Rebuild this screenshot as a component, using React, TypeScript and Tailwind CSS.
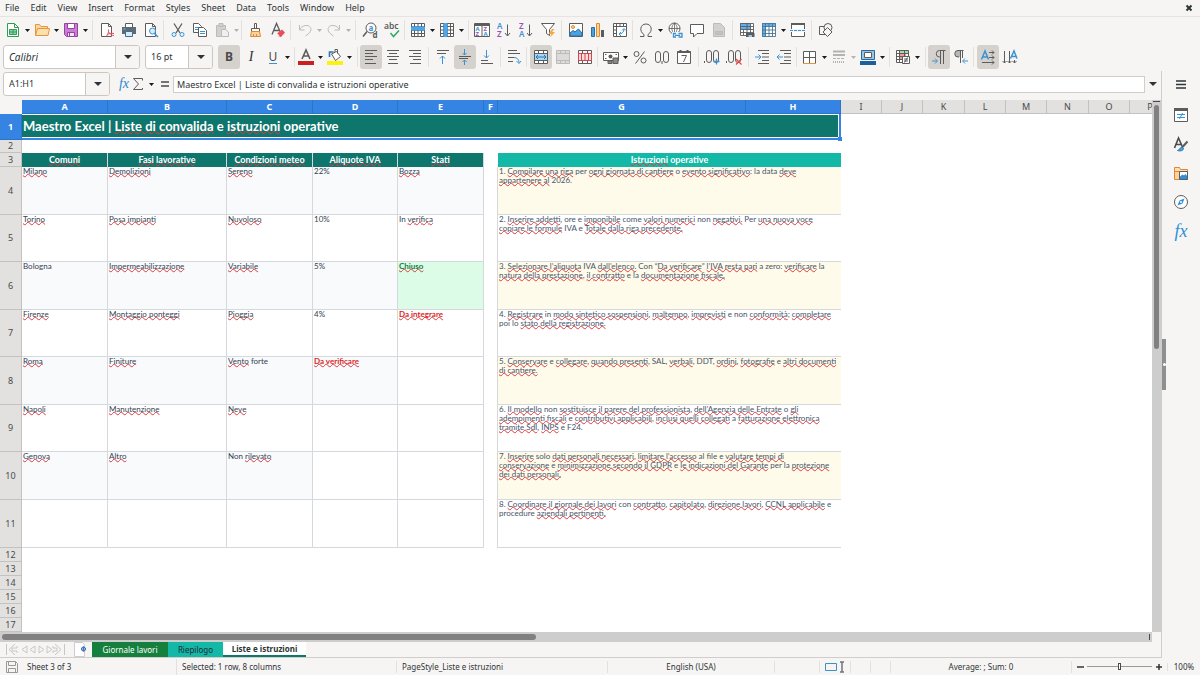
import { Fragment, useState } from 'react'
import type { ReactNode } from 'react'

const G = '#5c5c5c'
const B = '#3a93d4'
const L = '#bdbbb9'

const menus = ['File', 'Edit', 'View', 'Insert', 'Format', 'Styles', 'Sheet', 'Data', 'Tools', 'Window', 'Help']

// 16x16 drawings, stroked with a 1px pen on the half pixel grid
const icons: Record<string, ReactNode> = {
  new: (
    <>
      <path d="M2.5 1.5h7l4 4v9h-11z" fill="#fff" stroke="#2e9e55" />
      <path d="M9.5 1.5v4h4" stroke="#2e9e55" />
      <path d="M4.5 7.5h7v5h-7zM4.5 10h7M8 7.5v5" fill="#8fd6a6" stroke="#2e9e55" />
    </>
  ),
  open: (
    <>
      <path d="M1.5 13.5v-11h4l1.5 2h6.5v3" fill="#fbd9a5" stroke="#e8953a" />
      <path d="M1.5 13.5l2-7h12l-1.5 7z" fill="#fde0b0" stroke="#e8953a" />
    </>
  ),
  save: (
    <>
      <path d="M1.5 1.5h13v13h-11l-2-2z" fill="#c77fd0" stroke="#9a3fa8" />
      <path d="M4.5 1.5h7v5h-7z" fill="#fff" stroke="#9a3fa8" />
      <path d="M4.5 10.5h7v4h-7z" fill="#f3e3f5" stroke="#9a3fa8" />
      <path d="M6.5 11v3" stroke="#9a3fa8" />
    </>
  ),
  pdf: (
    <>
      <path d="M2.5 1.5h7l3 3v10h-10z" fill="#fff" stroke={G} />
      <path d="M9.5 1.5v3h3" stroke={G} />
      <path d="M7 14.500c2-2 3-5 2.500-7M9.500 9.500c1 2.500 3 4 5.500 4M8 13c2-1.500 4-2 7-1.500" stroke="#e8505a" />
    </>
  ),
  print: (
    <>
      <path d="M4.500 5v-3.500h7v3.500" fill="#fff" stroke={G} />
      <path d="M1 5h14v7H1z" fill="#5f6a72" />
      <path d="M2.500 7h2" stroke="#7cc0ee" />
      <path d="M4.500 9.500h7v5h-7z" fill="#d7ebf9" stroke="#39719a" />
    </>
  ),
  preview: (
    <>
      <path d="M2.500 1.500h7l3 3v10h-10z" fill="#fff" stroke={G} />
      <path d="M9.500 1.500v3h3" stroke={G} />
      <circle cx="9.500" cy="9" r="3" fill="#d8ecfa" stroke={B} />
      <path d="M11.500 11.500l3.500 3.500" stroke={B} strokeWidth="1.500" />
    </>
  ),
  cut: (
    <>
      <path d="M4 1.500l6 9.500M12 1.500l-6 9.500" stroke={G} strokeWidth="1.300" />
      <circle cx="4" cy="12.500" r="2" stroke={B} />
      <circle cx="12" cy="12.500" r="2" stroke={B} />
    </>
  ),
  copy: (
    <>
      <path d="M1.500 1.500h5l3 3v6h-8z" fill="#fff" stroke={G} />
      <path d="M3 5.500h4M3 7.500h3" stroke={B} />
      <path d="M6.500 5.500h5l3 3v6h-8z" fill="#fff" stroke={G} />
      <path d="M8 9.500h5M8 11.500h5" stroke={B} />
    </>
  ),
  paste: (
    <>
      <path d="M2.500 3.500h9v11h-9z" fill="#d3d1cf" stroke={L} />
      <path d="M5 1.500h4v3H5z" fill="#d3d1cf" stroke={L} />
      <path d="M7.500 7.500h4l3 2.500v4.500h-7z" fill="#f1f0ef" stroke={L} />
    </>
  ),
  brush: (
    <>
      <path d="M6.500 1.500h2v5h-2z" fill="#fff" stroke={G} />
      <path d="M3.500 6.500h8v3h-8z" fill="#fff" stroke={G} />
      <path d="M3.500 9.500h8l1 5h-10z" fill="#fbd39b" stroke="#e08b33" />
      <path d="M5.500 12v2.500M8.500 12v2.500" stroke="#e08b33" />
    </>
  ),
  clear: (
    <>
      <path d="M2 12.500l4.500-11 4 9M3.500 8.500h6" stroke={G} strokeWidth="1.300" />
      <path d="M7 11.500l5-4 3 3-4 4.500H9z" fill="#e8515b" />
      <path d="M7 11.500l2.500 3" stroke="#fff" />
    </>
  ),
  undo: (
    <>
      <path d="M2.500 3v5h5" stroke={L} />
      <path d="M2.500 8c2-5 9-6 11-2.500 1.500 3-1 6-5 8.500" stroke={L} />
    </>
  ),
  redo: (
    <>
      <path d="M13.500 3v5h-5" stroke={L} />
      <path d="M13.500 8c-2-5-9-6-11-2.500-1.500 3 1 6 5 8.500" stroke={L} />
    </>
  ),
  find: (
    <>
      <circle cx="9" cy="6" r="5" fill="#fff" stroke={G} />
      <path d="M5 9.500l-4 5" stroke={G} strokeWidth="1.500" />
      <text x="6.500" y="8.500" fontSize="8" fill={B} fontWeight="700">a</text>
      <text x="10.500" y="15.500" fontSize="8" fill={G} fontWeight="700">d</text>
    </>
  ),
  spell: (
    <>
      <text x="0" y="7" fontSize="8.500" fill={G} fontWeight="600">abc</text>
      <path d="M6.500 11l3 3.500 5.500-6" stroke="#2fa866" strokeWidth="1.500" />
    </>
  ),
  row: (
    <>
      <path d="M1.500 1.500h13v13h-13z" fill="#fff" />
      <path d="M1.500 1.500h13v13h-13zM1.500 11.500h13M4.500 1.500v13M8 1.500v13M11.500 1.500v13" stroke={G} />
      <path d="M1 4.500h14v4H1z" fill="#4fa6e6" />
      <path d="M1 4.500h14M1 8.500h14" stroke="#2776b3" strokeWidth=".6" />
    </>
  ),
  column: (
    <>
      <path d="M1.500 1.500h13v13h-13z" fill="#fff" />
      <path d="M1.500 1.500h13v13h-13zM11.500 1.500v13M1.500 4.500h13M1.500 8h13M1.500 11.500h13" stroke={G} />
      <path d="M4.500 1h4v14h-4z" fill="#4fa6e6" />
      <path d="M4.500 1v14M8.500 1v14" stroke="#2776b3" strokeWidth=".6" />
    </>
  ),
  sort: (
    <>
      <path d="M.5 1.500h15v13H.5zM.5 3.500h15M8 3.500v11" fill="#fff" stroke={G} />
      <path d="M1 2.500h14" stroke={G} />
      <text x="1.500" y="9" fontSize="6" fill={B} fontWeight="700">A</text>
      <text x="1.500" y="14" fontSize="6" fill="#9a4fb5" fontWeight="700">Z</text>
      <text x="9.500" y="9" fontSize="6" fill="#9a4fb5" fontWeight="700">Z</text>
      <text x="9.500" y="14" fontSize="6" fill={B} fontWeight="700">A</text>
    </>
  ),
  az: (
    <>
      <text x="1" y="7" fontSize="8" fill={B} fontWeight="600">A</text>
      <text x="1" y="15" fontSize="8" fill="#9a4fb5" fontWeight="600">Z</text>
      <path d="M11.500 2.500v11M9 11l2.500 3 2.500-3" stroke={G} />
    </>
  ),
  za: (
    <>
      <text x="1" y="7" fontSize="8" fill="#9a4fb5" fontWeight="600">Z</text>
      <text x="1" y="15" fontSize="8" fill={B} fontWeight="600">A</text>
      <path d="M11.500 2.500v11M9 11l2.500 3 2.500-3" stroke={G} />
    </>
  ),
  filter: (
    <>
      <path d="M1.500 1.500h13l-5 6v6l-3-2v-4z" fill="#fff" stroke={G} />
      <path d="M12 7l-3.500 5h3l-2 4 5.500-6h-3l2.500-3z" fill="#f2a54a" />
    </>
  ),
  image: (
    <>
      <path d="M1.500 1.500h13v13h-13z" fill="#fff" stroke={G} />
      <path d="M2 14v-3l3-2.500 2 1.500 3.500-3 3.500 4v3z" fill="#4aa3e0" stroke="#2d6fa5" />
      <circle cx="5" cy="5" r="1.500" fill="#fbd39b" stroke="#e08b33" />
    </>
  ),
  chart: (
    <>
      <path d="M1.500 5.500h3v9h-3z" fill="#4aa3e0" stroke="#2d6fa5" />
      <path d="M6.500 1.500h3v13h-3z" fill="#fbd39b" stroke="#e08b33" />
      <path d="M11 8h3v7h-3z" fill={G} />
    </>
  ),
  pivot: (
    <>
      <path d="M1.500 1.500h13v13h-13zM1.500 4.500h13M4.500 1.500v13M8 1.500v3M11.500 1.500v3M1.500 8h3M1.500 11.500h3" fill="#fff" stroke={G} />
      <path d="M7 12c3 0 5-2 5-5M10 8.500l2-2 2 2M9 10l-2 2 2 2" stroke={B} />
    </>
  ),
  omega: <path d="M2 14.500h4v-2c-5-3-4-10.500 2-10.500s7 7.500 2 10.500v2h4" stroke={G} />,
  link: (
    <>
      <circle cx="7.500" cy="6.500" r="5.500" fill="#fff" stroke={G} />
      <path d="M2 6.500h11M7.500 1v11M7.500 1c-3.500 3-3.500 8 0 11M7.500 1c3.500 3 3.500 8 0 11" stroke={G} strokeWidth=".8" />
      <path d="M5 10h11v6H5z" fill="#f6f5f4" />
      <path d="M9 11.500H6.500v3.500H9M11.500 11.500H15v3.500h-3.500M8 13.300h5" stroke={B} strokeWidth="1.300" />
    </>
  ),
  comment: <path d="M1.500 2.500h13v9H8l-3.500 3.500v-3.500h-3z" fill="#fff" stroke={G} />,
  header: (
    <>
      <path d="M2.500 1.500h7l4 4v9h-11z" fill="#d3d1cf" stroke={L} />
      <path d="M4.500 9.500h7v3h-7z" fill="#c3c1bf" stroke={L} />
    </>
  ),
  area: (
    <>
      <path d="M1.500 1.500h13v13h-13z" fill="#fff" />
      <path d="M1 1h10v7H1z" fill="#5fb0ec" />
      <path d="M1.500 1.500h13v12h-13zM1.500 4.500h13M1.500 7.500h13M1.500 10.500h13M4.500 7.500v6M8 1.500v12M11.500 1.500v12" stroke={G} strokeWidth=".9" />
      <path d="M7 11h8.500v4H7z" fill={G} />
      <path d="M9.500 13h3.500v2H9.500z" fill="#8fc9f1" />
    </>
  ),
  freeze: (
    <>
      <path d="M2.500 2.500h12v12h-12z" fill="#fff" />
      <path d="M1 1h14v3.500H5V15H1z" fill="#5fb0ec" />
      <path d="M1.500 1.500h13v13h-13zM1.500 4.500h13M1.500 8h13M1.500 11.500h13M4.500 1.500v13M8 1.500v13M11.500 1.500v13" stroke="#4a7591" strokeWidth=".9" />
    </>
  ),
  split: (
    <>
      <path d="M1.500 2.500h13v12h-13z" fill="#fff" stroke={G} />
      <path d="M1 2h14" stroke={G} strokeWidth="2" />
      <path d="M0 8.500h16" stroke="#f6f5f4" strokeWidth="3" />
      <path d="M0 8.500h16" stroke={B} strokeDasharray="3 1" />
    </>
  ),
  shapes: (
    <>
      <path d="M1.500 4.500h8v8h-8z" stroke={G} />
      <circle cx="10" cy="5.500" r="4" fill="#f6f5f4" stroke={G} />
      <path d="M9.500 5.500l4.500 4.500-4.500 4.500L5 10z" fill="#f6f5f4" stroke={G} />
    </>
  ),
  left: <path d="M2 1.500h12M2 4.500h8M2 7.500h12M2 10.500h8M2 14.500h11" stroke={G} />,
  center: <path d="M2 1.500h12M4 4.500h8M2 7.500h12M4 10.500h8M3 14.500h10" stroke={G} />,
  right: <path d="M2 1.500h12M6 4.500h8M2 7.500h12M6 10.500h8M3 14.500h11" stroke={G} />,
  top: (
    <>
      <path d="M2 1.500h12M2 4.500h9" stroke={G} />
      <path d="M7.500 15V7M5 9.500L7.500 7l2.500 2.500" stroke={B} />
    </>
  ),
  middle: (
    <>
      <path d="M2 7.500h12M2 9.500h9" stroke={G} />
      <path d="M7.500 0v6M5.500 4l2 2 2-2M7.500 16v-5M5.500 13l2-2 2 2" stroke={B} />
    </>
  ),
  bottom: (
    <>
      <path d="M2 11.500h7M2 14.500h12" stroke={G} />
      <path d="M7.500 1v8M5 6.500L7.500 9 10 6.500" stroke={B} />
    </>
  ),
  wrap: (
    <>
      <path d="M2 1.500h9M2 4.500h12M2 8.500h6M2 12.500h5" stroke={G} />
      <path d="M8 8.500c3 0 5 2 5 5M10.500 12l2.500 2.500 2-2.500" stroke={B} />
    </>
  ),
  merge: (
    <>
      <path d="M1.500 1.500h13v13h-13zM1.500 4.500h13M1.500 11.500h13M5.500 1.500v3M10.500 1.500v3M5.500 11.500v3M10.500 11.500v3" fill="#fff" stroke={G} />
      <path d="M2 5h12v6H2z" fill="#a9d6f5" />
      <path d="M3 8h10M5 6L3 8l2 2M11 6l2 2-2 2" stroke="#2776b3" />
    </>
  ),
  mergeOff: <path d="M1.500 1.500h13v13h-13zM1.500 4.500h13M1.500 11.500h13M5.500 1.500v3M10.500 1.500v3M5.500 11.500v3M10.500 11.500v3" fill="#dddbd9" stroke={L} />,
  unmerge: (
    <>
      <path d="M1.500 1.500h13v13h-13zM5.500 1.500v3M10.500 1.500v3M5.500 11.500v3M10.500 11.500v3" fill="#fff" stroke={G} />
      <path d="M1.500 4.500h13v7h-13zM4.500 4.500v7M8 4.500v7M11.500 4.500v7" fill="#fbdcdc" stroke="#d8454a" />
    </>
  ),
  currency: (
    <>
      <path d="M.5 3.500h15v8H.5z" fill="#fff" stroke={G} />
      <circle cx="7.500" cy="7.500" r="2" fill={G} />
      <path d="M2 5.500h1.500M12.500 5.500H14M2 9.500h1.500" stroke={G} />
      <path d="M10 9h5v5.500h-5zM5 12h4v2.500H5z" fill="#8b8a88" stroke={G} />
    </>
  ),
  percent: (
    <>
      <circle cx="4.500" cy="5" r="2.500" stroke={G} />
      <circle cx="11.500" cy="11.500" r="2.500" stroke={G} />
      <path d="M12.500 2.500l-9 12" stroke={G} />
    </>
  ),
  number: (
    <>
      <rect x="1.500" y="2.500" width="5" height="11" rx="2.500" stroke={G} />
      <rect x="9.500" y="2.500" width="5" height="11" rx="2.500" stroke={G} />
      <path d="M8 12v3" stroke={G} />
    </>
  ),
  date: (
    <>
      <path d="M1.500 2.500h13v12h-13z" fill="#fff" stroke={G} />
      <path d="M1.500 3h13M4.500 1v3M11.500 1v3" stroke={G} strokeWidth="2" />
      <path d="M5.500 6.500h5l-3 6.500" stroke={G} />
    </>
  ),
  decAdd: (
    <>
      <path d="M.5 12v2" stroke={G} />
      <rect x="2.500" y="1.500" width="5" height="12" rx="2.500" stroke={G} />
      <rect x="9.500" y="1.500" width="5" height="12" rx="2.500" stroke={G} />
      <path d="M12.500 9.500v6M9.500 12.500h6" stroke={B} strokeWidth="1.300" />
    </>
  ),
  decDel: (
    <>
      <path d="M.5 12v2" stroke={G} />
      <rect x="2.500" y="1.500" width="5" height="12" rx="2.500" stroke={G} />
      <rect x="9.500" y="1.500" width="5" height="12" rx="2.500" stroke={G} />
      <path d="M10 10l5.500 5.500M15.500 10L10 15.500" stroke="#e0484e" strokeWidth="1.300" />
    </>
  ),
  indent: (
    <>
      <path d="M4 1.500h11M8 4.500h7M8 8h7M8 11.500h7M4 14.500h11" stroke={G} />
      <path d="M1 8h6M4.500 5.500L7 8l-2.500 2.500" stroke={B} />
    </>
  ),
  outdent: (
    <>
      <path d="M4 1.500h11M8 4.500h7M8 8h7M8 11.500h7M4 14.500h11" stroke={G} />
      <path d="M7 8H1M3.500 5.500L1 8l2.500 2.500" stroke={B} />
    </>
  ),
  borders: (
    <>
      <path d="M1.500 14.500v-12h12v12M7.500 2.500v12M1.500 8.500h12" fill="#fff" stroke={G} />
      <path d="M1 14.500h13" stroke="#e0963f" />
    </>
  ),
  lineStyle: (
    <>
      <path d="M2 2.500h12M2 6h12" stroke="#b5b3b1" strokeWidth="2" />
      <path d="M2 9.500h12" stroke="#b5b3b1" strokeDasharray="3 1" />
      <path d="M2 13h12" stroke="#b5b3b1" strokeDasharray="1 1" strokeWidth="2" />
    </>
  ),
  lineColor: (
    <>
      <path d="M1.500 1.500h13v9h-13z" fill="#8fc9f1" stroke="#35668c" />
      <path d="M4.500 3.500h7v5h-7z" fill="#fff" stroke={G} />
      <path d="M0 12h16v4H0z" fill="#1c5f9e" />
    </>
  ),
  conditional: (
    <>
      <path d="M1.500 1.500h12v12h-12z" fill="#fff" />
      <path d="M5 1h9v4H5z" fill="#9fdfae" />
      <path d="M5 5h6v6H5z" fill="#f29b9b" />
      <path d="M1.500 1.500h12v12h-12zM1.500 4.500h12M1.500 7.500h12M1.500 10.500h12M4.500 1.500v12M9.500 1.500v6" stroke={G} />
      <path d="M7.500 7.500h7v7h-7z" fill="#fff" stroke={G} />
      <path d="M9 10h4M9 12h4M12.500 8.500l-3 5" stroke={G} />
    </>
  ),
  ltr: (
    <>
      <path d="M14.500 1.500H8.500a3 3 0 000 6.500h1M9.500 1.500V15M12.500 1.500V15" stroke={G} />
      <path d="M1 12h5M4 9.500L6.500 12 4 14.500" stroke={B} />
    </>
  ),
  rtl: (
    <>
      <path d="M7.500 1.500H5a3 3 0 000 6.500h2.500z" fill="#b9b7b5" />
      <path d="M10.500 1.500H5a3 3 0 000 6.500h1M7.500 1.500V14M9.500 1.500V9" stroke={G} />
      <path d="M15 12h-5M12 9.500L9.500 12l2.500 2.500" stroke={B} />
    </>
  ),
  textLtr: (
    <>
      <path d="M1.500 10.500L5 2l3.500 8.500M2.500 8h5" stroke={B} strokeWidth="1.500" />
      <path d="M9 3.500h5M9 8.500h5M2 13.500h12M12 1.500l2 2-2 2M12 6.500l2 2-2 2M12 11.500l2 2-2 2" stroke={G} />
    </>
  ),
  textTtb: (
    <>
      <path d="M8.500 9.500L12 2l3 7.500M9.500 7.500h5" stroke={B} strokeWidth="1.500" />
      <path d="M2.500 2v12M7.500 2v12M12.500 11v3M.5 12l2 2 2-2M5.500 12l2 2 2-2M10.500 12l2 2 2-2" stroke={G} />
    </>
  ),
  fill: (
    <>
      <path d="M4.500 5l5-2.500 4 5-5 4zM8 3V.500h2.500v4" fill="#fff" stroke={G} />
      <path d="M2.500 8V3h4" stroke="#2776b3" strokeWidth="1.600" />
      <path d="M0 12h16v4H0z" fill="#fbf30c" />
    </>
  ),
  fontColor: (
    <>
      <path d="M4 10l4-9 4 9M5 7h6" stroke={G} strokeWidth="1.600" />
      <path d="M0 12h16v4H0z" fill="#c9211e" />
    </>
  ),
  properties: (
    <>
      <path d="M1.500 2.500h13v12h-13z" fill="#fff" stroke={G} />
      <path d="M1 2.500h14" stroke={G} strokeWidth="3" />
      <path d="M4 7.500h8M4 10.500h8M9.500 6l-3 6" stroke={B} />
    </>
  ),
  styles: (
    <>
      <path d="M1.500 12L5.500 2l4 9M3 8.500h5.500" stroke="#4a4a4a" strokeWidth="1.600" />
      <path d="M14.500 5.500L9.500 11" stroke={G} strokeWidth="2" />
      <path d="M4.500 14.500c2 0 2-3 4.500-3.500l1.500 1.500c0 2-3 3-6 2z" fill="#4aa3e0" stroke="#2776b3" />
    </>
  ),
  gallery: (
    <>
      <path d="M1.500 14.500v-12h5l1 2h7v2" fill="#fde0b0" stroke="#e0853a" />
      <path d="M1.500 14.500v-8h13v8z" fill="#fbd39b" stroke="#e0853a" />
      <path d="M6.500 6.500h8v8h-8z" fill="#fff" stroke={G} />
      <path d="M7 14v-2.500l2.500-2 1.500 1 1.500-1.500 1.500 2V14z" fill="#2f8fd6" />
    </>
  ),
  navigator: (
    <>
      <circle cx="8" cy="8" r="6.500" fill="#fff" stroke={G} />
      <path d="M11.500 4.500L9.500 9.500l-5 2 2-5z" fill="#2f8fd6" />
      <circle cx="8" cy="8" r="1" fill="#fff" />
    </>
  ),
  sum: <path d="M12.500 4.500V2.500h-9l5 5.500-5 5.500h9V12" stroke={G} />,
  disk: <path d="M2.500 2.500h9l2 2v9h-11zM4.500 2.500v4h7v-4M4.500 13.500v-4h7v4" stroke="#9a9996" />,
}

function Icon({ name }: { name: string }) {
  return (
    <svg viewBox="0 0 16 16" fill="none" className="size-4 shrink-0 overflow-visible font-['Noto_Sans']" aria-hidden="true">
      {icons[name]}
    </svg>
  )
}

function Caret({ dim }: { dim?: boolean }) {
  return (
    <svg viewBox="0 0 5 3" className="h-[3px] w-[5px] shrink-0" aria-hidden="true">
      <path d="M0 0h5L2.500 3z" fill={dim ? '#b5b3b1' : '#1a1a1a'} />
    </svg>
  )
}

type Tool = { id: string; label: string; drop?: boolean; on?: boolean; dim?: boolean; glyph?: ReactNode }
type Group = { width: string; tools: Tool[] }

const standardBar: Group[] = [
  { width: 'w-[93px] pl-[2px]', tools: [{ id: 'new', label: 'New', drop: true }, { id: 'open', label: 'Open', drop: true }, { id: 'save', label: 'Save', drop: true }] },
  { width: 'w-[71px] pl-[3px]', tools: [{ id: 'pdf', label: 'Export as PDF' }, { id: 'print', label: 'Print' }, { id: 'preview', label: 'Print preview' }] },
  { width: 'w-[78px] pl-[3px]', tools: [{ id: 'cut', label: 'Cut' }, { id: 'copy', label: 'Copy' }, { id: 'paste', label: 'Paste', drop: true, dim: true }] },
  { width: 'w-[49px] pl-[3px]', tools: [{ id: 'brush', label: 'Clone formatting' }, { id: 'clear', label: 'Clear formatting' }] },
  { width: 'w-[65px] pl-[3px]', tools: [{ id: 'undo', label: 'Undo', drop: true, dim: true }, { id: 'redo', label: 'Redo', drop: true, dim: true }] },
  { width: 'w-[49px] pl-[3px]', tools: [{ id: 'find', label: 'Find and replace' }, { id: 'spell', label: 'Spelling' }] },
  { width: 'w-[64px] pl-[2px]', tools: [{ id: 'row', label: 'Row', drop: true }, { id: 'column', label: 'Column', drop: true }] },
  { width: 'w-[93px] pl-[2px]', tools: [{ id: 'sort', label: 'Sort' }, { id: 'az', label: 'Sort ascending' }, { id: 'za', label: 'Sort descending' }, { id: 'filter', label: 'AutoFilter' }] },
  { width: 'w-[71px] pl-[3px]', tools: [{ id: 'image', label: 'Insert image' }, { id: 'chart', label: 'Insert chart' }, { id: 'pivot', label: 'Pivot table' }] },
  { width: 'w-[100px] pl-[2px]', tools: [{ id: 'omega', label: 'Special character', drop: true }, { id: 'link', label: 'Hyperlink' }, { id: 'comment', label: 'Comment' }, { id: 'header', label: 'Headers and footers', dim: true }] },
  { width: 'w-[79px] pl-[3px]', tools: [{ id: 'area', label: 'Print area' }, { id: 'freeze', label: 'Freeze panes', drop: true }, { id: 'split', label: 'Split window' }] },
  { width: 'pl-[3px] border-r-0', tools: [{ id: 'shapes', label: 'Draw functions' }] },
]

const formatBar: Group[] = [
  {
    width: 'w-[82px] pl-[5px]',
    tools: [
      { id: 'bold', label: 'Bold', on: true, glyph: <span className="text-xs font-bold text-[#4a4a4a]">B</span> },
      { id: 'italic', label: 'Italic', glyph: <span className="font-['Liberation_Serif'] text-sm italic">I</span> },
      { id: 'underline', label: 'Underline', drop: true, glyph: <span className="border-b border-[#3a93d4] text-xs leading-3 text-[#4a4a4a]">U</span> },
    ],
  },
  { width: 'w-[63px]', tools: [{ id: 'fontColor', label: 'Font colour', drop: true }, { id: 'fill', label: 'Background colour', drop: true }] },
  { width: 'w-[71px] pl-[2px]', tools: [{ id: 'left', label: 'Align left', on: true }, { id: 'center', label: 'Align centre' }, { id: 'right', label: 'Align right' }] },
  { width: 'w-[72px] pl-[3px]', tools: [{ id: 'top', label: 'Align top' }, { id: 'middle', label: 'Centre vertically', on: true }, { id: 'bottom', label: 'Align bottom' }] },
  { width: 'w-[26px] pl-[2px]', tools: [{ id: 'wrap', label: 'Wrap text' }] },
  { width: 'w-[71px] pl-[3px]', tools: [{ id: 'merge', label: 'Merge and centre', on: true }, { id: 'mergeOff', label: 'Merge cells', dim: true }, { id: 'unmerge', label: 'Unmerge cells' }] },
  { width: 'w-[101px] pl-[2px]', tools: [{ id: 'currency', label: 'Currency', drop: true }, { id: 'percent', label: 'Percent' }, { id: 'number', label: 'Number' }, { id: 'date', label: 'Date' }] },
  { width: 'w-[50px] pl-[2px]', tools: [{ id: 'decAdd', label: 'Add decimal place' }, { id: 'decDel', label: 'Delete decimal place' }] },
  { width: 'w-[48px] pl-[2px]', tools: [{ id: 'indent', label: 'Increase indent' }, { id: 'outdent', label: 'Decrease indent' }] },
  { width: 'w-[93px] pl-[2px]', tools: [{ id: 'borders', label: 'Borders', drop: true }, { id: 'lineStyle', label: 'Border style', drop: true, dim: true }, { id: 'lineColor', label: 'Border colour', drop: true }] },
  { width: 'w-[36px] pl-[2px]', tools: [{ id: 'conditional', label: 'Conditional formatting', drop: true }] },
  { width: 'w-[48px] pl-[2px]', tools: [{ id: 'ltr', label: 'Left to right', on: true }, { id: 'rtl', label: 'Right to left' }] },
  { width: 'pl-[3px] border-r-0', tools: [{ id: 'textLtr', label: 'Horizontal text', on: true }, { id: 'textTtb', label: 'Vertical text' }] },
]

function ToolGroups({ groups }: { groups: Group[] }) {
  return (
    <>
      {groups.map((group, i) => (
        <div key={i} className={`flex h-5 shrink-0 items-center border-r border-[#e3e1df] ${group.width}`}>
          {group.tools.map((tool) => (
            <Fragment key={tool.id}>
              <button
                type="button"
                aria-label={tool.label}
                className={`flex h-6 w-[22px] shrink-0 items-center justify-center rounded-[3px] ${tool.on ? 'bg-[#d5d1cd]' : ''}`}
              >
                {tool.glyph ?? <Icon name={tool.id} />}
              </button>
              {tool.drop && (
                <button type="button" aria-label={`${tool.label} options`} className="flex h-6 w-[7px] shrink-0 items-center justify-center">
                  <Caret dim={tool.dim} />
                </button>
              )}
            </Fragment>
          ))}
        </div>
      ))}
    </>
  )
}

function Combo({ label, value, width, italic }: { label: string; value: string; width: string; italic?: boolean }) {
  return (
    <div className={`flex h-6 shrink-0 overflow-hidden rounded-[3px] border border-[#cdc7c2] bg-white ${width}`}>
      <input
        aria-label={label}
        defaultValue={value}
        className={`min-w-0 flex-1 bg-transparent px-[5px] outline-none ${italic ? 'text-[10px] italic' : ''}`}
      />
      <button type="button" aria-label={`${label} list`} className="flex w-6 items-center justify-center border-l border-[#cdc7c2] bg-[#f6f5f4]">
        <svg viewBox="0 0 8 4" className="h-1 w-2" aria-hidden="true">
          <path d="M0 0h8L4 4z" fill="#2e3436" />
        </svg>
      </button>
    </div>
  )
}

const columns = [
  { name: 'A', width: 'w-[86px]' },
  { name: 'B', width: 'w-[119px]' },
  { name: 'C', width: 'w-[86px]' },
  { name: 'D', width: 'w-[85px]' },
  { name: 'E', width: 'w-[86px]' },
  { name: 'F', width: 'w-[14px]' },
  { name: 'G', width: 'w-[248px]' },
  { name: 'H', width: 'w-[95px]' },
  { name: 'I', width: 'w-[41px]' },
  { name: 'J', width: 'w-[41px]' },
  { name: 'K', width: 'w-[42px]' },
  { name: 'L', width: 'w-[41px]' },
  { name: 'M', width: 'w-[41px]' },
  { name: 'N', width: 'w-[42px]' },
  { name: 'O', width: 'w-[41px]' },
  { name: 'P', width: 'w-[41px]' },
]

// [..] marks the words the spell checker flags
const headings = ['[Comuni]', '[Fasi] [lavorative]', '[Condizioni meteo]', '[Aliquote IVA]', '[Stati]']

const rows: { height: string; cells: string[]; note: string }[] = [
  { height: 'h-[48px]', cells: ['[Milano]', '[Demolizioni]', '[Sereno]', '22%', '[Bozza]'], note: '1. [Compilare una riga] per [ogni giornata di cantiere] o [evento significativo]: la data [deve]\n[appartenere al] 2026.' },
  { height: 'h-[47px]', cells: ['[Torino]', '[Posa impianti]', '[Nuvoloso]', '10%', 'In [verifica]'], note: '2. [Inserire addetti], ore e [imponibile] come [valori numerici] non [negativi.] Per [una nuova voce]\n[copiare le formule] IVA e [Totale dalla riga precedente.]' },
  { height: 'h-[48px]', cells: ['Bologna', '[Impermeabilizzazione]', '[Variabile]', '5%', '[Chiuso]'], note: '3. [Selezionare l’aliquota] IVA [dall’elenco.] Con “[Da verificare]” [l’IVA resta pari] a zero: [verificare] la\n[natura della prestazione], [il contratto] e la [documentazione fiscale.]' },
  { height: 'h-[47px]', cells: ['[Firenze]', '[Montaggio ponteggi]', '[Pioggia]', '4%', '[Da integrare]'], note: '4. [Registrare] in [modo sintetico sospensioni], [maltempo], [imprevisti] e non [conformità]; [completare]\npoi lo [stato della registrazione.]' },
  { height: 'h-[48px]', cells: ['[Roma]', '[Finiture]', '[Vento] forte', '[Da verificare]', ''], note: '5. [Conservare] e [collegare], [quando presenti], SAL, [verbali], DDT, [ordini], [fotografie] e [altri documenti]\n[di cantiere.]' },
  { height: 'h-[47px]', cells: ['[Napoli]', '[Manutenzione]', '[Neve]', '', ''], note: '6. [Il modello] non [sostituisce il parere del professionista], [dell’Agenzia delle Entrate] o [gli]\n[adempimenti fiscali] e [contributivi applicabili], [inclusi quelli collegati] a [fatturazione elettronica]\n[tramite SdI], [INPS] e F24.' },
  { height: 'h-[48px]', cells: ['[Genova]', '[Altro]', 'Non [rilevato]', '', ''], note: '7. [Inserire] solo [dati personali necessari], [limitare l’accesso] al file e [valutare tempi di]\n[conservazione] e [minimizzazione secondo il GDPR] e [le indicazioni del Garante] per la [protezione]\n[dei dati personali.]' },
  { height: 'h-[48px]', cells: ['', '', '', '', ''], note: '8. [Coordinare il giornale dei lavori] con [contratto], [capitolato], [direzione lavori], [CCNL applicabile] e\nprocedure [aziendali pertinenti.]' },
]

function Spell({ text }: { text: string }) {
  return (
    <>
      {text.split(/[[\]]/).map((part, i) =>
        i % 2 === 1 ? (
          <span key={i} className="underline decoration-[#e0393e] decoration-wavy decoration-1 underline-offset-[-1px] [text-decoration-skip-ink:none]">
            {part}
          </span>
        ) : (
          part
        ),
      )}
    </>
  )
}

function RowHead({ n, active }: { n: number; active?: boolean }) {
  return (
    <th
      scope="row"
      className={`border-r border-b p-0 text-center ${
        active ? 'border-[#2a76c6] bg-[#3584e4] font-bold text-white' : 'border-[#c4c2c0] bg-[#e2e1df] font-normal text-[#4a4a4a]'
      }`}
    >
      {n}
    </th>
  )
}

const emptyRows = [12, 13, 14, 15, 16, 17, 18]

function Sheet() {
  return (
    <table className="w-0 table-fixed border-separate border-spacing-0 text-[9px] leading-3">
      <colgroup>
        <col className="w-[22px]" />
        {columns.map((c) => (
          <col key={c.name} className={c.width} />
        ))}
      </colgroup>
      <thead>
        <tr className="h-[14px]">
          <td className="border-b border-[#f6f5f4] bg-[#f6f5f4] p-0" />
          {columns.map((c, i) => (
            <th
              key={c.name}
              scope="col"
              className={`border-r border-b p-0 text-center ${
                i < 8 ? 'border-[#2a76c6] bg-[#3584e4] font-bold text-white' : 'border-[#c4c2c0] bg-[#e2e1df] font-normal text-[#4a4a4a]'
              }`}
            >
              {c.name}
            </th>
          ))}
        </tr>
      </thead>
      <tbody>
        <tr className="h-[26px]">
          <RowHead n={1} active />
          <td colSpan={8} className="relative border-r-2 border-b-2 border-[#3584e4] bg-[#0f766e] p-0 align-top">
            <div className="flex h-6 items-center border border-l-0 border-white pl-px font-['Lato'] text-[13px] font-bold whitespace-nowrap text-white">
              <span>
                <Spell text="Maestro Excel | [Liste di convalida] e [istruzioni] operative" />
              </span>
            </div>
            <div className="absolute -right-[3px] -bottom-[3px] size-1 bg-[#3584e4]" />
          </td>
        </tr>
        <tr className="h-[13px]">
          <RowHead n={2} />
        </tr>
        <tr className="h-[14px]">
          <RowHead n={3} />
          {headings.map((h) => (
            <td key={h} className="border-r border-[#d5d9dd] bg-[#0f766e] p-0 text-center font-['Lato'] text-[9px] leading-3 font-bold text-white">
              <Spell text={h} />
            </td>
          ))}
          <td />
          <td colSpan={2} className="bg-[#14b8a6] p-0 text-center font-['Lato'] text-[9px] leading-3 font-bold text-white">
            <Spell text="[Istruzioni] operative" />
          </td>
        </tr>
        {rows.map((row, r) => (
          <tr key={r} className={row.height}>
            <RowHead n={r + 4} />
            {row.cells.map((cell, c) => {
              const shaded = r % 2 === 0 && (c < 4 ? r < 7 && !(c === 3 && r > 4) : r === 0)
              const done = cell === '[Chiuso]'
              const todo = cell.startsWith('[Da ')
              return (
                <td
                  key={c}
                  className={`border-r border-b border-[#d5d9dd] p-0 pl-px align-top font-['Lato'] text-[8px] leading-[9px] ${
                    done ? 'bg-[#dcfce7] font-bold text-[#15803d]' : shaded ? 'bg-[#f8fafc]' : 'bg-white'
                  } ${todo ? 'font-bold text-[#dc2626]' : done ? '' : 'text-[#374151]'}`}
                >
                  <Spell text={cell} />
                </td>
              )
            })}
            <td className="border-r border-[#d5d9dd]" />
            <td
              colSpan={2}
              className={`border-b border-[#d5d9dd] p-0 pl-px align-top font-['Lato'] text-[8px] leading-[9px] whitespace-pre text-[#475569] ${
                r % 2 === 0 && r < 7 ? 'bg-[#fffbeb]' : 'bg-white'
              }`}
            >
              <Spell text={row.note} />
            </td>
          </tr>
        ))}
        {emptyRows.map((n) => (
          <tr key={n} className="h-[14px]">
            <RowHead n={n} />
          </tr>
        ))}
      </tbody>
    </table>
  )
}

const tabs = [
  { name: 'Giornale lavori', width: 'w-[76px]', tone: 'bg-[#15803d] text-white' },
  { name: 'Riepilogo', width: 'w-[55px]', tone: 'bg-[#14b8a6] text-[#1f2937]' },
  { name: 'Liste e istruzioni', width: 'w-[83px]', tone: 'bg-white text-[#2e3436]' },
]

const sidebar = [
  { id: 'properties', label: 'Properties' },
  { id: 'styles', label: 'Styles' },
  { id: 'gallery', label: 'Gallery' },
  { id: 'navigator', label: 'Navigator' },
]

export default function App() {
  const [active, setActive] = useState('Liste e istruzioni')
  const [zoom, setZoom] = useState(50)

  return (
    <div className="flex h-screen flex-col overflow-hidden bg-[#f6f5f4] font-['Noto_Sans',sans-serif] text-[9px] leading-3 text-[#2e3436]">
      <nav className="flex h-[17px] shrink-0 items-center gap-[11px] border-b border-[#e6e4e2] pr-[7px] pl-[5px]">
        {menus.map((m) => (
          <button key={m} type="button">{m}</button>
        ))}
        <button type="button" aria-label="Close document" className="ml-auto">
          <svg viewBox="0 0 8 8" className="size-2" aria-hidden="true">
            <path d="M1.500 1.500l5 5M6.500 1.500l-5 5" stroke="#2e3436" strokeWidth="2" />
          </svg>
        </button>
      </nav>

      <div className="flex h-[27px] shrink-0 items-center pb-px">
        <ToolGroups groups={standardBar} />
      </div>

      <div className="flex h-[27px] shrink-0 items-center pb-px pl-[3px]">
        <Combo label="Font name" value="Calibri" width="w-[137px]" italic />
        <div className="w-[5px] shrink-0" />
        <Combo label="Font size" value="16 pt" width="w-[68px]" />
        <ToolGroups groups={formatBar} />
      </div>

      <div className="flex min-h-0 flex-1">
        <main className="flex min-w-0 flex-1 flex-col border-r border-[#d0cecc]">
          {/* Formula bar */}
          <div className="flex h-[29px] shrink-0 items-center pb-[3px] pl-[3px]">
            <Combo label="Name box" value="A1:H1" width="w-[107px]" />
            <button type="button" aria-label="Function wizard" className="ml-2 w-3 font-['Liberation_Serif'] text-sm text-[#2f86cc] italic">fx</button>
            <button type="button" aria-label="Select function" className="flex items-center gap-[3px]">
              <Icon name="sum" />
              <Caret />
            </button>
            <button type="button" aria-label="Formula" className="ml-[3px] flex w-4 justify-center">
              <svg viewBox="0 0 8 6" className="h-[6px] w-2" aria-hidden="true">
                <path d="M0 1h8M0 5h8" stroke="#4a4a4a" strokeWidth="1.500" />
              </svg>
            </button>
            <input
              aria-label="Formula input"
              defaultValue="Maestro Excel | Liste di convalida e istruzioni operative"
              className="h-[17px] min-w-0 flex-1 border border-[#d0cecc] bg-white px-[3px] outline-none"
            />
            <button type="button" aria-label="Expand formula bar" className="flex w-4 justify-center">
              <svg viewBox="0 0 8 4" className="h-1 w-2" aria-hidden="true">
                <path d="M0 0h8L4 4z" fill="#2e3436" />
              </svg>
            </button>
          </div>

          <div className="flex min-h-0 flex-1">
            <div className="min-w-0 flex-1 overflow-hidden bg-white">
              <Sheet />
            </div>
            <div className="flex w-[9px] shrink-0 flex-col items-center gap-[3px] bg-[#cdcdcd] pt-px">
              <div className="h-px w-[7px] bg-[#4a4a4a]" />
              <div className="h-[46%] w-[5px] rounded-full bg-[#808080]" />
            </div>
          </div>

          <div className="mr-[9px] flex h-[10px] shrink-0 items-center justify-between bg-[#cdcdcd] px-[2px]">
            <div className="h-[6px] w-[46.5%] rounded-full bg-[#808080]" />
            <div className="h-[6px] w-px bg-[#4a4a4a]" />
          </div>

          <div className="flex h-4 shrink-0 border-b border-[#d0cecc] text-[8px]">
            <svg viewBox="0 0 64 14" className="ml-[3px] h-[14px] w-16" fill="none" stroke="#c9c7c5" aria-hidden="true">
              <path d="M3.500 2v11M12 2L6 7.500l6 5.500M14 4v2H9v3h5v2M24 4l-5 3.500 5 3.500zM32 4l-5 3.500 5 3.500zM36 4l5 3.500-5 3.500zM44 4l5 3.500-5 3.500zM52 2l6 5.500-6 5.500M50 4v2h4v3h-4v2M61.500 2v11" />
            </svg>
            <button type="button" aria-label="Add sheet" className="mr-[6px] ml-[7px] flex w-3">
              <svg viewBox="0 0 12 15" className="h-[15px] w-3" aria-hidden="true">
                <path d="M.5.5h8l2 2v12H.5z" fill="#fff" stroke="#d0cecc" />
                <circle cx="9.500" cy="7" r="2" fill="#fff" stroke="#2a62b8" />
                <path d="M9.500 4.500v5M7 7h5" stroke="#2a62b8" strokeWidth=".8" />
              </svg>
            </button>
            {tabs.map((t) => (
              <button
                key={t.name}
                type="button"
                onClick={() => setActive(t.name)}
                className={`${t.width} ${t.tone} whitespace-nowrap ${active === t.name ? 'border-b-2 border-[#0f766e] font-bold' : ''}`}
              >
                {t.name}
              </button>
            ))}
          </div>
        </main>

        <aside className="relative flex w-[38px] shrink-0 flex-col items-center gap-[13px] pt-[5px]">
          <button type="button" aria-label="Sidebar settings" className="mb-[2px] flex size-4 items-center justify-center">
            <svg viewBox="0 0 10 9" className="h-[9px] w-[10px]" aria-hidden="true">
              <path d="M0 1h10M0 4.500h10M0 8h10" stroke="#2e3436" strokeWidth="1.500" />
            </svg>
          </button>
          {sidebar.map((s) => (
            <button key={s.id} type="button" aria-label={s.label}>
              <Icon name={s.id} />
            </button>
          ))}
          <button type="button" aria-label="Functions" className="h-4 font-['Liberation_Serif'] text-lg leading-4 text-[#2f8fd6] italic">fx</button>
          <div className="absolute top-[268px] left-0 flex h-[51px] w-1 items-center justify-center bg-[#8f8f8f]">
            <div className="size-[3px] rounded-full bg-white" />
          </div>
        </aside>
      </div>

      <footer className="flex h-[17px] shrink-0 items-center text-[8px]">
        <div className="flex w-[177px] items-center gap-[7px] border-r border-[#e3e1df] pl-1">
          <Icon name="disk" />
          Sheet 3 of 3
        </div>
        <div className="w-[220px] border-r border-[#e3e1df] pl-[5px]">Selected: 1 row, 8 columns</div>
        <div className="w-[211px] border-r border-[#e3e1df] pl-[5px]">PageStyle_Liste e istruzioni</div>
        <div className="w-[167px] border-r border-[#e3e1df] text-center">English (USA)</div>
        <div className="h-3 w-[45px] border-r border-[#e3e1df]" />
        <div className="flex w-[31px] items-center justify-center border-r border-[#e3e1df]">
          <svg viewBox="0 0 20 12" className="h-3 w-5" fill="none" aria-hidden="true">
            <path d="M.5 2.500h11v7H.5z" stroke="#3a93c4" />
            <path d="M17 1.500v9M15 1h4M15 11h4" stroke="#2e3436" />
          </svg>
        </div>
        <div className="h-3 w-5 border-r border-[#e3e1df]" />
        <div className="h-3 w-5 border-r border-[#e3e1df]" />
        <div className="flex-1 border-r border-[#e3e1df] text-center">Average: ; Sum: 0</div>
        <div className="flex w-24 items-center justify-center gap-[3px] border-r border-[#e3e1df]">
          <button type="button" aria-label="Zoom out">
            <svg viewBox="0 0 8 8" className="size-2" aria-hidden="true">
              <path d="M1 4h7" stroke="#2e3436" strokeWidth="1.500" />
            </svg>
          </button>
          <input
            type="range"
            aria-label="Zoom"
            min={0}
            max={100}
            value={zoom}
            onChange={(e) => setZoom(Number(e.target.value))}
            className="h-2 w-[65px] appearance-none bg-transparent [&::-webkit-slider-runnable-track]:h-px [&::-webkit-slider-runnable-track]:bg-[#9a9996] [&::-webkit-slider-thumb]:-mt-[3px] [&::-webkit-slider-thumb]:h-[7px] [&::-webkit-slider-thumb]:w-[3px] [&::-webkit-slider-thumb]:appearance-none [&::-webkit-slider-thumb]:border [&::-webkit-slider-thumb]:border-[#4a4a4a] [&::-webkit-slider-thumb]:bg-white"
          />
          <button type="button" aria-label="Zoom in">
            <svg viewBox="0 0 8 8" className="size-2" aria-hidden="true">
              <path d="M1 4h6M4 1v6" stroke="#2e3436" strokeWidth="1.500" />
            </svg>
          </button>
        </div>
        <button type="button" className="w-8 text-center">100%</button>
      </footer>
    </div>
  )
}
